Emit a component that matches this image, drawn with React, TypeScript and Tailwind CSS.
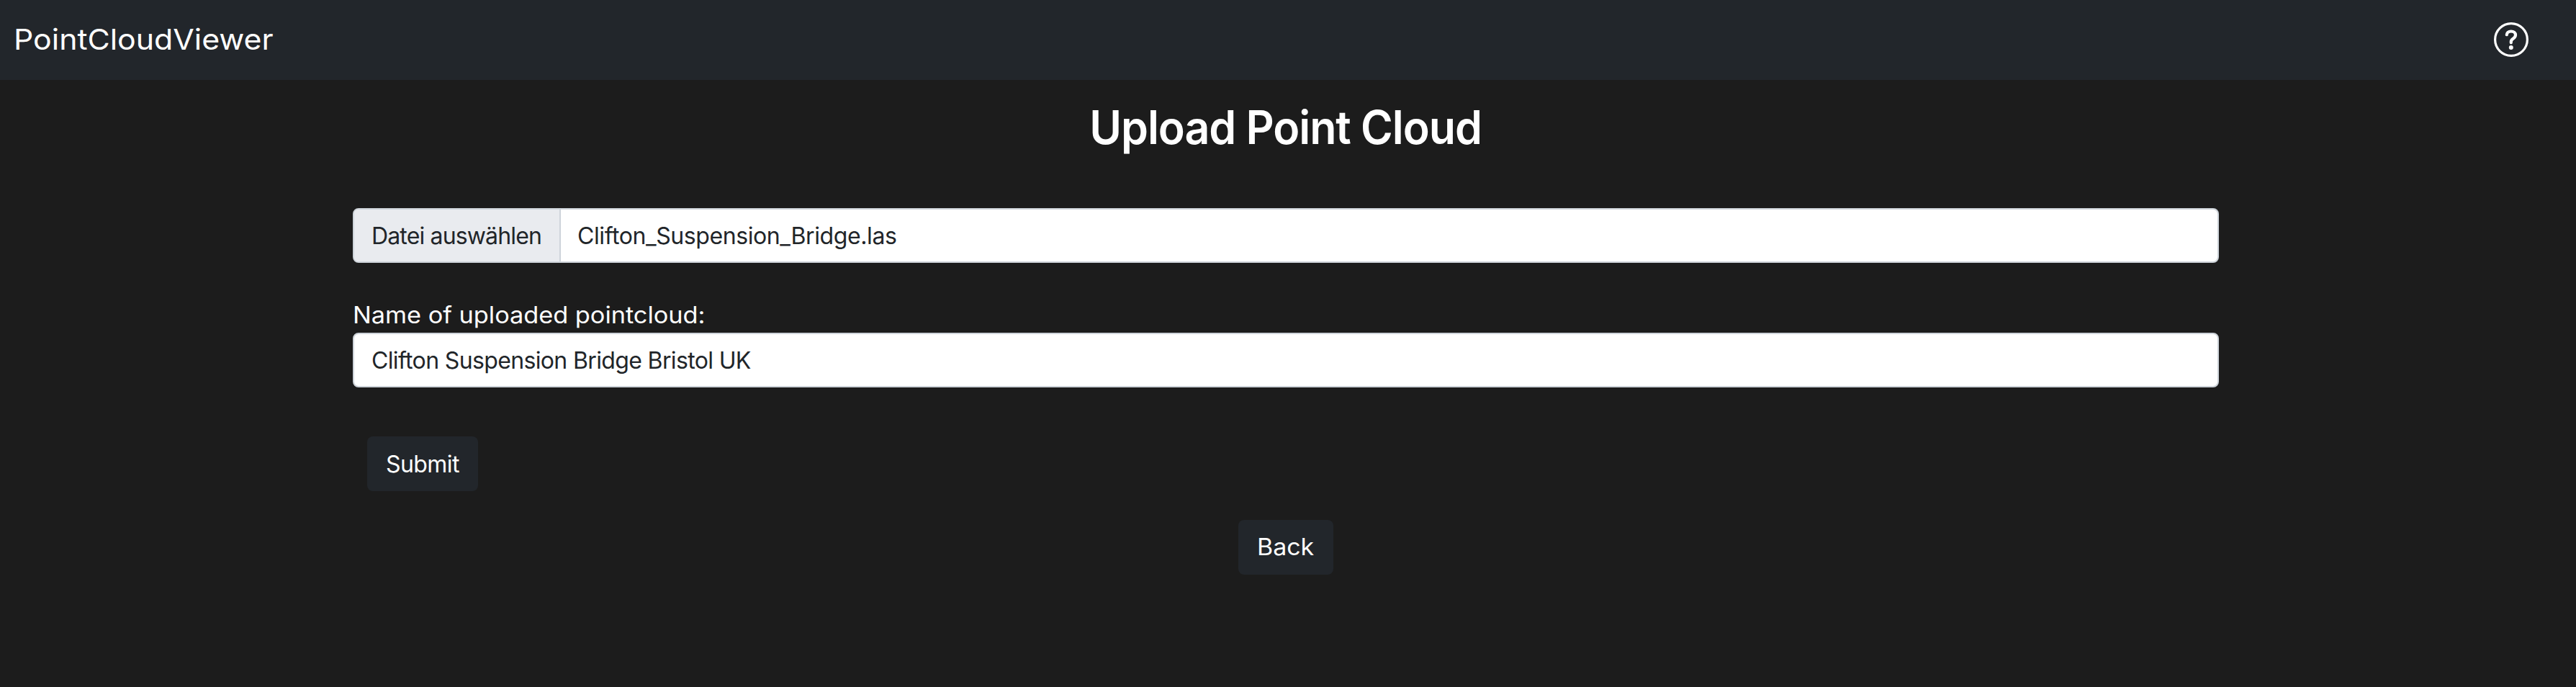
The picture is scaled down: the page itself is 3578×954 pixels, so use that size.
function HelpIcon() {
  return (
    <svg viewBox="0 0 48 48" className="size-12" fill="none" stroke="currentColor">
      <circle cx="24" cy="24" r="22.4" strokeWidth="3.2" />
      <path
        d="M17.8 17.2C18.2 14 20.6 12.5 23.8 12.5c3.6 0 6.2 2 6.2 5.1 0 2.5-1.3 3.8-3.4 5.2-2 1.3-2.8 2.5-2.8 4.3v1.2"
        strokeWidth="4.2"
        strokeLinecap="round"
      />
      <circle cx="23.8" cy="34.9" r="3" fill="currentColor" stroke="none" />
    </svg>
  );
}

export default function App() {
  return (
    <div className="min-h-[954px] w-full bg-[#1c1c1c] font-['Inter','Noto_Sans',sans-serif] text-[32px] leading-[48px] text-white">
      <header className="flex h-[111px] items-center justify-between bg-[#22262b] pb-[2px] pl-[19px] pr-[66px]">
        <a className="inline-block origin-left scale-x-[1.07] text-[40px] leading-[60px]">PointCloudViewer</a>
        <button aria-label="Help" className="mt-[1px] block">
          <HelpIcon />
        </button>
      </header>

      <main className="flex flex-col items-center pr-[6px] pt-[27px]">
        <h1 className="scale-x-[0.95] whitespace-nowrap text-[64px] font-semibold leading-[77px] tracking-[-1.08px]">
          Upload Point Cloud
        </h1>

        <form className="mt-[74px] flex w-[2592px] flex-col items-start">
          <div className="flex h-[76px] w-full overflow-hidden rounded-lg border-2 border-[#ced4da] bg-white text-[#212529]">
            <span className="flex w-[287px] shrink-0 items-center whitespace-nowrap border-r-2 border-[#ced4da] bg-[#e9ebef] pl-6 pt-px tracking-[-0.85px]">
              Datei auswählen
            </span>
            <span className="flex items-center pl-[23px] pt-px tracking-[-0.41px]">Clifton_Suspension_Bridge.las</span>
          </div>

          <label className="mt-[49px] inline-block origin-left scale-x-[1.071] whitespace-nowrap">
            Name of uploaded pointcloud:
          </label>
          <div className="flex h-[76px] w-full items-center rounded-lg border-2 border-[#ced4da] bg-white px-6 pt-px tracking-[-0.64px] text-[#212529]">
            Clifton Suspension Bridge Bristol UK
          </div>

          <button
            type="button"
            className="ml-5 mt-[68px] h-[76px] w-[154px] rounded-lg bg-[#22262b] pl-[26px] pt-px text-left tracking-[-0.56px]"
          >
            Submit
          </button>
        </form>

        <button type="button" className="mt-10 h-[76px] w-[132px] rounded-lg bg-[#22262b] pl-[26px] text-left">
          <span className="inline-block origin-left scale-x-[1.06]">Back</span>
        </button>
      </main>
    </div>
  );
}
